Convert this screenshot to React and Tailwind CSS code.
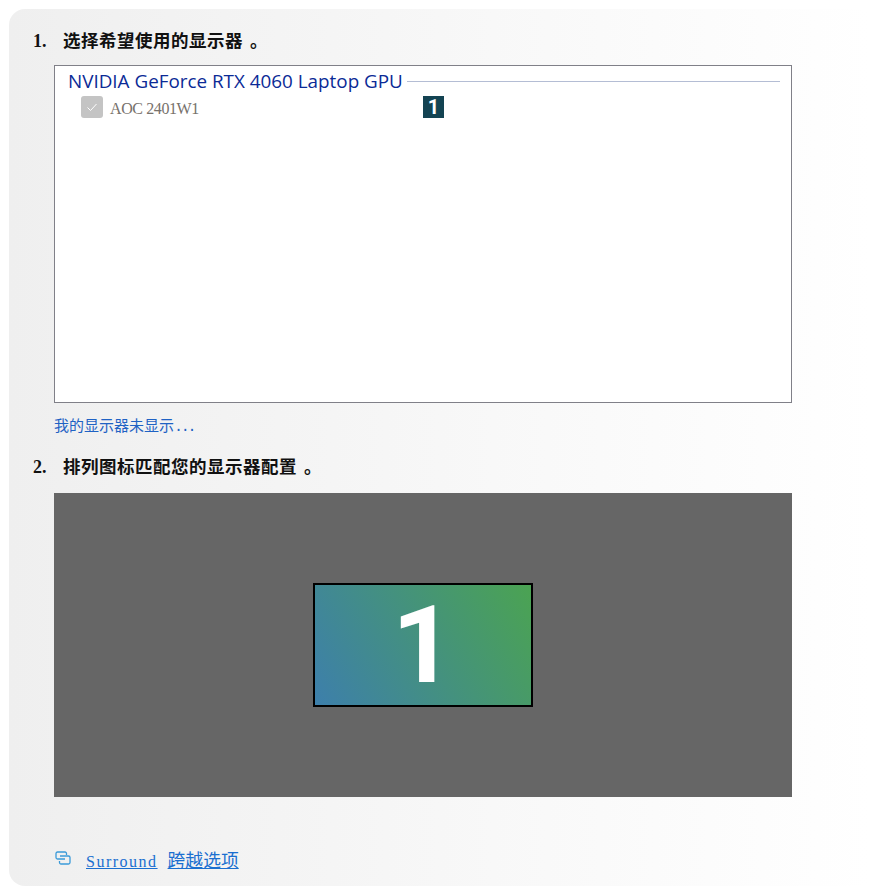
import React from "react";

const latin = "font-['Liberation_Serif',serif]";
const cjk = "font-['Noto_Sans_CJK_SC',sans-serif]";
const mono = "font-['Liberation_Mono',monospace]";

const Step = ({ n, children }) => (
  <div className="flex items-baseline h-6 text-[#111]">
    <span className={`w-[30px] text-[18px] font-bold ${latin}`}>{n}.</span>
    <span className={`text-[17.5px] font-bold tracking-[0.5px] whitespace-nowrap ${cjk}`}>
      {children}
      <span className="ml-[7px]">。</span>
    </span>
  </div>
);

const SurroundIcon = () => (
  <svg className="mb-1" width="16" height="14" viewBox="0 0 16 14" fill="none" stroke="#3a9ad9" strokeWidth="1.3">
    <path d="M11.5 4V2.5A1.5 1.5 0 0 0 10 1H2.5A1.5 1.5 0 0 0 1 2.5V6.5A1.5 1.5 0 0 0 2.5 8H10" />
    <path d="M5 5H13.5A1.5 1.5 0 0 1 15 6.5V11.5A1.5 1.5 0 0 1 13.5 13H6A1.5 1.5 0 0 1 4.5 11.5V10" />
  </svg>
);

export default function App() {
  return (
    <div className="bg-white h-[893px] pt-[9px] pl-[9px] pr-2">
      <div className="h-[877px] rounded-l-[16px] bg-[linear-gradient(to_right,#efefef,#ffffff)] pt-[18px] pl-6 flex flex-col">
        <Step n="1">选择希望使用的显示器</Step>

        <div className="ml-[21px] mt-[14px] w-[738px] h-[338px] bg-white border border-[#808088] pl-[13px] pr-[11px]">
          <div className="flex items-center gap-1 pt-[3px]">
            <span className="text-[18.85px] leading-[24px] text-[#0b2a96] font-['Open_Sans',sans-serif] whitespace-nowrap">
              NVIDIA GeForce RTX 4060 Laptop GPU
            </span>
            <div className="flex-1 h-px bg-[#b4bdd4]" />
          </div>
          <div className="flex items-center h-[22px] mt-[3px] ml-[13px]">
            <div className="w-[22px] h-[22px] rounded-[3px] bg-[#c4c4c4] flex items-center justify-center">
              <svg width="12" height="10" viewBox="0 0 12 10" fill="none" stroke="#ffffff" strokeWidth="1">
                <path d="M1.5 5.5L4.5 8.5L10.5 2" />
              </svg>
            </div>
            <span className={`ml-[7px] pt-[3px] w-[313px] text-[16px] tracking-[-0.4px] text-[#77716b] ${latin}`}>AOC 2401W1</span>
            <span className="w-[21px] h-[22px] bg-[#134352] text-white text-[20px] font-bold flex items-center justify-center font-['Roboto',sans-serif]">
              1
            </span>
          </div>
        </div>

        <div className={`ml-[21px] mt-[11px] h-6 flex items-baseline text-[15px] text-[#1f62c4] ${cjk}`}>
          我的显示器未显示<span className={`${mono} tracking-[-2.3px]`}>...</span>
        </div>

        <div className="mt-[15px]">
          <Step n="2">排列图标匹配您的显示器配置</Step>
        </div>

        <div className="ml-[21px] mt-[16px] w-[738px] h-[304px] bg-[#666666] flex items-center justify-center">
          <div className="w-[220px] h-[124px] border-2 border-black bg-[linear-gradient(60deg,#3d7fab,#4ba352)] flex items-center justify-center">
            <span className="text-[108px] leading-none font-bold text-white font-['Roboto',sans-serif]">1</span>
          </div>
        </div>

        <div className="ml-[22px] mt-[49px] flex items-center">
          <SurroundIcon />
          <a className="ml-[15px] text-[#1a6fd0] underline whitespace-nowrap">
            <span className={`text-[16px] tracking-[1.5px] ${latin}`}>Surround</span>
            <span className={`ml-[10px] text-[17.8px] ${cjk}`}>跨越选项</span>
          </a>
        </div>
      </div>
    </div>
  );
}
